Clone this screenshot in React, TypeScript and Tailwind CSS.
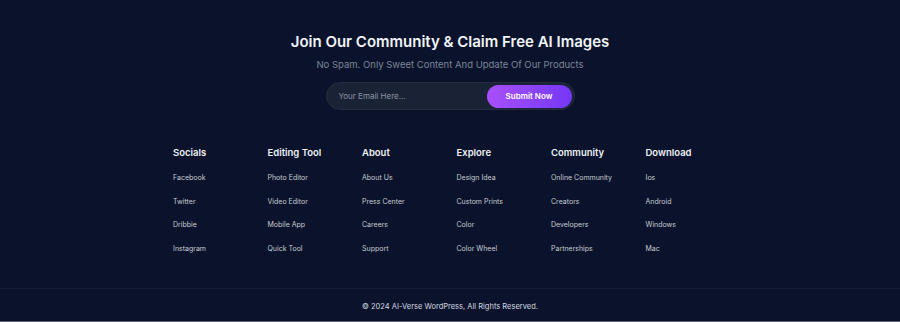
const columns = [
  { title: "Socials", links: ["Facebook", "Twitter", "Dribbie", "Instagram"] },
  { title: "Editing Tool", links: ["Photo Editor", "Video Editor", "Mobile App", "Quick Tool"] },
  { title: "About", links: ["About Us", "Press Center", "Careers", "Support"] },
  { title: "Explore", links: ["Design Idea", "Custom Prints", "Color", "Color Wheel"] },
  { title: "Community", links: ["Online Community", "Creators", "Developers", "Partnerships"] },
  { title: "Download", links: ["Ios", "Android", "Windows", "Mac"] },
];

export default function App() {
  return (
    <footer className="w-[900px] h-[322px] bg-[#0a132b] font-['Inter',sans-serif] flex flex-col border-b border-b-[#5b6170]">
      <div className="flex flex-col items-center pt-[32px]">
        <h2 className="text-[15px] leading-[20px] font-semibold text-[#f1f3f7]">
          Join Our Community &amp; Claim Free AI Images
        </h2>
        <p className="mt-[6px] text-[9.5px] leading-[14px] text-[#7d8599]">
          No Spam. Only Sweet Content And Update Of Our Products
        </p>
        <form className="mt-[10px] w-[249px] h-[28px] rounded-full bg-[#1a2335] border border-[#232c3f] flex items-center justify-between pl-[12px] pr-[2px]">
          <span className="text-[8px] text-[#8c93a3]">Your Email Here...</span>
          <button
            type="button"
            className="h-[23px] w-[85px] rounded-full bg-gradient-to-r from-[#a94ffb] to-[#7436f5] text-white text-[8px] font-semibold"
          >
            Submit Now
          </button>
        </form>
      </div>
      <div className="grid grid-cols-[repeat(6,94.5px)] pl-[173px] mt-[36px]">
        {columns.map((c) => (
          <div key={c.title} className="flex flex-col">
            <h3 className="text-[9.5px] leading-[14px] font-semibold text-[#eef0f4]">{c.title}</h3>
            <ul className="mt-[13px] flex flex-col gap-[13.5px]">
              {c.links.map((l) => (
                <li key={l} className="text-[7px] leading-[10px] text-[#c8ccd4]">
                  {l}
                </li>
              ))}
            </ul>
          </div>
        ))}
      </div>
      <div className="mt-auto border-t border-t-[#151d33] h-[33px] pt-[4px] flex items-center justify-center">
        <p className="text-[7.5px] text-[#d4d8e0]">© 2024 AI-Verse WordPress, All Rights Reserved.</p>
      </div>
    </footer>
  );
}
